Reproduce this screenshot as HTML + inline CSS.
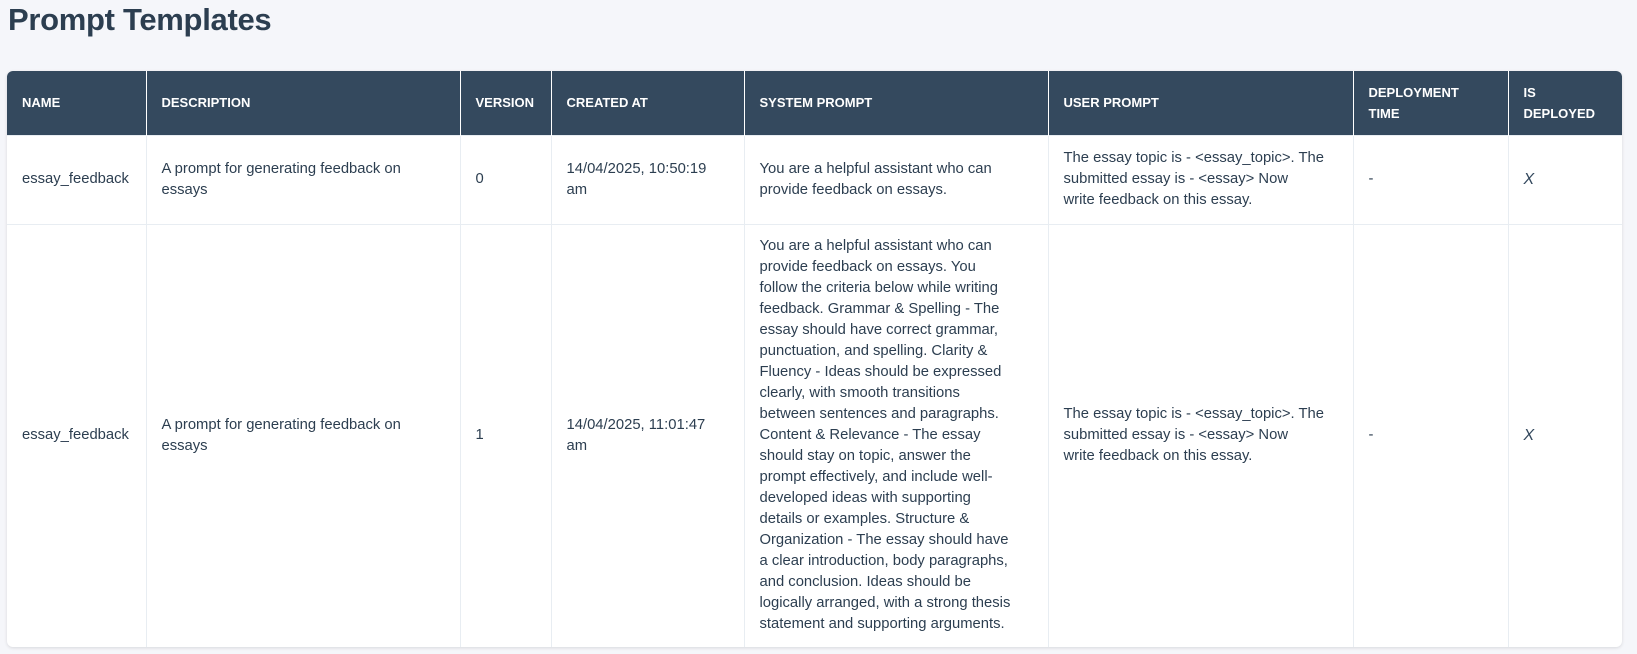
<!DOCTYPE html>
<html><head><meta charset="utf-8"><style>
*{box-sizing:border-box;margin:0;padding:0}
body{width:1637px;height:654px;background:#f5f6fa;font-family:"Liberation Sans",sans-serif;color:#2c3e50;overflow:hidden}
h1{position:absolute;left:8px;top:2px;font-size:31px;font-weight:bold;color:#2c3e50;letter-spacing:-0.3px}
.wrap{position:absolute;left:7px;top:71px;width:1615px;border-radius:6px;overflow:hidden;background:#fff;box-shadow:0 1px 3px rgba(0,0,0,.12)}
table{border-collapse:collapse;table-layout:fixed;width:1615px}
th{background:#34495e;color:#fff;font-size:13px;font-weight:bold;text-align:left;padding:0 15px;height:64px;border-left:1px solid #fff;line-height:21px}
th:first-child,td:first-child{border-left:none}
td{font-size:14.8px;line-height:21px;padding:0 15px;border-left:1px solid #e8edf2;border-top:1px solid #e8edf2;vertical-align:middle;color:#2c3e50;white-space:nowrap}
tr.r1 td{height:89px}
tr.r2 td{height:423px}
.x{font-style:italic;font-weight:normal;font-size:16px;color:#34495e}
</style></head><body>
<h1>Prompt Templates</h1>
<div class="wrap"><table>
<colgroup><col style="width:139px"><col style="width:314px"><col style="width:91px"><col style="width:193px"><col style="width:304px"><col style="width:305px"><col style="width:155px"><col style="width:114px"></colgroup>
<tr><th>NAME</th><th>DESCRIPTION</th><th>VERSION</th><th>CREATED AT</th><th>SYSTEM PROMPT</th><th>USER PROMPT</th><th>DEPLOYMENT<br>TIME</th><th>IS<br>DEPLOYED</th></tr>
<tr class="r1"><td>essay_feedback</td><td>A prompt for generating feedback on<br>essays</td><td>0</td><td>14/04/2025, 10:50:19<br>am</td><td>You are a helpful assistant who can<br>provide feedback on essays.</td><td>The essay topic is - &lt;essay_topic&gt;. The<br>submitted essay is - &lt;essay&gt; Now<br>write feedback on this essay.</td><td>-</td><td><span class="x">X</span></td></tr>
<tr class="r2"><td>essay_feedback</td><td>A prompt for generating feedback on<br>essays</td><td>1</td><td>14/04/2025, 11:01:47<br>am</td><td>You are a helpful assistant who can<br>provide feedback on essays. You<br>follow the criteria below while writing<br>feedback. Grammar &amp; Spelling - The<br>essay should have correct grammar,<br>punctuation, and spelling. Clarity &amp;<br>Fluency - Ideas should be expressed<br>clearly, with smooth transitions<br>between sentences and paragraphs.<br>Content &amp; Relevance - The essay<br>should stay on topic, answer the<br>prompt effectively, and include well-<br>developed ideas with supporting<br>details or examples. Structure &amp;<br>Organization - The essay should have<br>a clear introduction, body paragraphs,<br>and conclusion. Ideas should be<br>logically arranged, with a strong thesis<br>statement and supporting arguments.</td><td>The essay topic is - &lt;essay_topic&gt;. The<br>submitted essay is - &lt;essay&gt; Now<br>write feedback on this essay.</td><td>-</td><td><span class="x">X</span></td></tr>
</table></div>
</body></html>
